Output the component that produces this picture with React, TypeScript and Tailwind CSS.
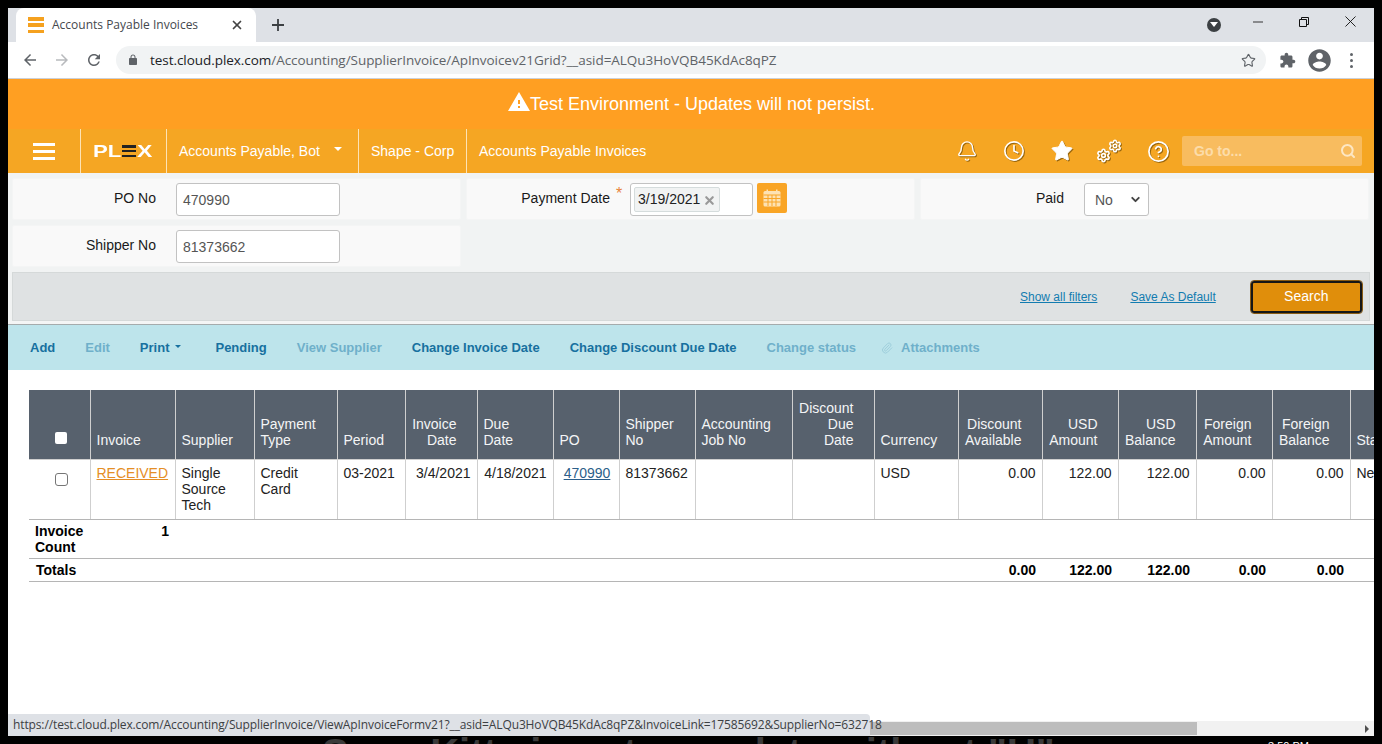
import React from "react";
import { Bell, Clock, Star, Settings, CircleHelp, Search, Paperclip, ChevronDown, X } from "lucide-react";

const Mat = ({ d, cls, fill = "currentColor" }: { d: string; cls: string; fill?: string }) => (
  <svg viewBox="0 0 24 24" className={cls} fill={fill}><path d={d} /></svg>
);

const widths = [61, 85, 79, 83, 68, 72, 76, 66, 76, 97, 82, 84, 84, 76, 78, 76, 78, 80];
const heads: [React.ReactNode, boolean][] = [
  ["", false],
  ["Invoice", false],
  ["Supplier", false],
  [<>Payment<br />Type</>, false],
  ["Period", false],
  [<>Invoice<br />Date</>, true],
  [<>Due<br />Date</>, false],
  ["PO", false],
  [<>Shipper<br />No</>, false],
  [<>Accounting<br />Job No</>, false],
  [<>Discount<br />Due<br />Date</>, true],
  ["Currency", false],
  [<>Discount<br />Available</>, true],
  [<>USD<br />Amount</>, true],
  [<>USD<br />Balance</>, true],
  [<>Foreign<br />Amount</>, true],
  [<>Foreign<br />Balance</>, true],
  ["Status", false],
];

const Filter = ({ label, star, children }: { label: string; star?: boolean; children: React.ReactNode }) => (
  <div className="flex h-[42px] rounded-[2px] bg-[#f9f9f9] border border-[#f4f5f5]">
    <div className="w-[143px] pt-[9px] text-right text-[14px] leading-[20px] text-[#1a1a1a]">{label}</div>
    <div className="w-[20px] pl-[6px] pt-[5px] text-[16px] leading-[20px] text-[#e8833a]">{star ? "*" : ""}</div>
    <div className="flex pt-[4px]">{children}</div>
  </div>
);

const TextBox = ({ value }: { value: string }) => (
  <div className="h-[33px] w-[164px] rounded-[3px] border border-[#c2c2c2] bg-white px-[6px] pt-[7px] text-[14px] leading-[18px] text-[#555]">{value}</div>
);

const actions: [string, boolean][] = [
  ["Add", true],
  ["Edit", false],
  ["Print", true],
  ["Pending", true],
  ["View Supplier", false],
  ["Change Invoice Date", true],
  ["Change Discount Due Date", true],
  ["Change status", false],
];

export default function App() {
  return (
    <div className="relative h-[744px] w-[1382px] overflow-hidden bg-black font-['Liberation_Sans',sans-serif]">
      <div className="relative mx-2 mt-2 flex h-[728px] w-[1366px] flex-col overflow-hidden bg-white">
        {/* tab strip */}
        <div className="flex h-[34px] shrink-0 items-end bg-[#dee1e6] pl-2">
          <div className="flex h-[34px] w-[240px] items-center rounded-t-[8px] bg-white pl-3 pr-[12px]">
            <div className="flex h-4 w-4 flex-col justify-between">
              <div className="h-[3.5px] bg-[#f5a11f]" />
              <div className="h-[3.5px] bg-[#f5a11f]" />
              <div className="h-[3.5px] bg-[#f5a11f]" />
            </div>
            <span className="ml-2 font-['Open_Sans',sans-serif] text-[12px] text-[#45484d]">Accounts Payable Invoices</span>
            <X className="ml-auto h-[14px] w-[14px] text-[#444]" strokeWidth={3} />
          </div>
          <svg viewBox="0 0 14 14" className="mb-[10px] ml-[15px] h-[14px] w-[14px]"><path d="M7 1v12M1 7h12" stroke="#3c4043" strokeWidth="1.8" /></svg>
          <div className="ml-auto mb-[9px] flex items-center">
            <div className="flex h-[14px] w-[14px] items-center justify-center rounded-full bg-[#3c4043]">
              <div className="h-0 w-0 border-x-[4px] border-t-[5px] border-x-transparent border-t-white" />
            </div>
            <svg viewBox="0 0 12 12" className="ml-[32px] mb-[6px] h-[10px] w-[10px]"><path d="M0 6h12" stroke="#111" strokeWidth="1" /></svg>
            <svg viewBox="0 0 10 10" className="ml-[36px] mb-[6px] h-[10px] w-[10px]" fill="none" stroke="#111" strokeWidth="1"><path d="M.5 2.5h7v7h-7zM2.5 2.5v-2h7v7h-2" /></svg>
            <svg viewBox="0 0 12 12" className="ml-[36px] mr-[18px] mb-[6px] h-[11px] w-[11px]" fill="none" stroke="#111" strokeWidth="1"><path d="M.5.5l11 11M11.5.5l-11 11" /></svg>
          </div>
        </div>
        {/* toolbar */}
        <div className="flex h-[37px] shrink-0 items-center border-b border-[#ccd0d6] bg-white">
          <Mat d="M20 11H7.83l5.59-5.59L12 4l-8 8 8 8 1.41-1.41L7.83 13H20v-2z" cls="ml-[13px] h-[18px] w-[18px] text-[#5f6368]" />
          <Mat d="M12 4l-1.41 1.41L16.17 11H4v2h12.17l-5.58 5.59L12 20l8-8z" cls="ml-[14px] h-[18px] w-[18px] text-[#b8babd]" />
          <Mat d="M17.65 6.35C16.2 4.9 14.21 4 12 4c-4.42 0-7.99 3.58-7.99 8s3.57 8 7.99 8c3.73 0 6.84-2.55 7.73-6h-2.08c-.82 2.33-3.04 4-5.65 4-3.31 0-6-2.69-6-6s2.69-6 6-6c1.66 0 3.14.69 4.22 1.78L13 11h7V4l-2.35 2.35z" cls="ml-[14px] h-[18px] w-[18px] text-[#5f6368]" />
          <div className="ml-[13px] flex h-[28px] w-[1150px] items-center rounded-full bg-[#f1f3f4] pl-[11px] pr-[10px]">
            <Mat d="M18 8h-1V6c0-2.76-2.24-5-5-5S7 3.24 7 6v2H6c-1.1 0-2 .9-2 2v10c0 1.1.9 2 2 2h12c1.1 0 2-.9 2-2V10c0-1.1-.9-2-2-2zM9 6c0-1.66 1.34-3 3-3s3 1.34 3 3v2H9V6z" cls="h-[12px] w-[12px] text-[#5f6368]" />
            <span className="ml-[11px] font-['Open_Sans',sans-serif] text-[13.5px] tracking-[-0.05px] text-[#5f6368]">
              <span className="text-[#202124]">test.cloud.plex.com</span>/Accounting/SupplierInvoice/ApInvoicev21Grid?__asid=ALQu3HoVQB45KdAc8qPZ
            </span>
            <Star className="ml-auto h-[15px] w-[15px] text-[#5f6368]" strokeWidth={1.8} />
          </div>
          <Mat d="M20.5 11H19V7c0-1.1-.9-2-2-2h-4V3.5C13 2.12 11.88 1 10.5 1S8 2.12 8 3.5V5H4c-1.1 0-1.99.9-1.99 2v3.8H3.5c1.49 0 2.7 1.21 2.7 2.7s-1.21 2.7-2.7 2.7H2V20c0 1.1.9 2 2 2h3.8v-1.5c0-1.49 1.21-2.7 2.7-2.7 1.49 0 2.7 1.21 2.7 2.7V22H17c1.1 0 2-.9 2-2v-4h1.5c1.38 0 2.5-1.12 2.5-2.5S21.88 11 20.5 11z" cls="ml-[13px] h-[17px] w-[17px] text-[#5f6368]" />
          <Mat d="M12 2C6.48 2 2 6.48 2 12s4.48 10 10 10 10-4.48 10-10S17.52 2 12 2zm0 3c1.66 0 3 1.34 3 3s-1.34 3-3 3-3-1.34-3-3 1.34-3 3-3zm0 14.2c-2.5 0-4.71-1.28-6-3.22.03-1.99 4-3.08 6-3.08 1.99 0 5.97 1.09 6 3.08-1.29 1.94-3.5 3.22-6 3.22z" cls="ml-[10px] h-[27px] w-[27px] text-[#5f6368]" />
          <div className="ml-[17px] flex flex-col gap-[3px]">
            <div className="h-[3px] w-[3px] rounded-full bg-[#5f6368]" />
            <div className="h-[3px] w-[3px] rounded-full bg-[#5f6368]" />
            <div className="h-[3px] w-[3px] rounded-full bg-[#5f6368]" />
          </div>
        </div>
        {/* env banner */}
        <div className="flex h-[50px] shrink-0 items-center justify-center bg-[#ff9f22] text-[18px] text-white">
          <Mat d="M1 21h22L12 2 1 21zm12-3h-2v-2h2v2zm0-4h-2v-4h2v4z" cls="h-[24px] w-[24px] -mt-[5px] -mr-[1px]" />
          <span>Test Environment - Updates will not persist.</span>
        </div>
        {/* nav */}
        <div className="flex h-[44px] shrink-0 items-stretch bg-[#f5a623] text-[14px] text-white">
          <div className="flex w-[73px] items-center border-r border-[#fde3b5] pl-[25px]">
            <div className="flex h-[17px] w-[22px] flex-col justify-between">
              <div className="h-[3px] bg-white" />
              <div className="h-[3px] bg-white" />
              <div className="h-[3px] bg-white" />
            </div>
          </div>
          <div className="flex w-[86px] items-center border-r border-[#fde3b5] pl-[12px] text-[17px] font-bold leading-none">
            <span className="inline-block w-[29px] origin-left scale-x-[1.3]">PL</span>
            <div className="flex h-[12px] w-[14px] flex-col justify-between">
              <div className="h-[2.5px] bg-[#222]" />
              <div className="h-[2.5px] bg-[#222]" />
              <div className="h-[2.5px] bg-[#222]" />
            </div>
            <span className="ml-[1px] inline-block origin-left scale-x-[1.35]">X</span>
          </div>
          <div className="flex w-[192px] items-center border-r border-[#fde3b5] pl-[12px]">
            <span>Accounts Payable, Bot</span>
            <div className="ml-[14px] mb-[5px] h-0 w-0 border-x-[4px] border-t-[4px] border-x-transparent border-t-white" />
          </div>
          <div className="flex w-[108px] items-center border-r border-[#fde3b5] pl-[12px]">Shape - Corp</div>
          <div className="flex items-center pl-[12px]">Accounts Payable Invoices</div>
          <div className="ml-auto flex items-center text-white [&>svg]:drop-shadow-[1px_1px_0_rgba(90,60,0,0.6)]">
            <Bell className="h-[22px] w-[22px]" strokeWidth={1.5} />
            <Clock className="ml-[25px] h-[22px] w-[22px]" strokeWidth={1.8} />
            <Star className="ml-[25px] h-[24px] w-[24px]" fill="white" strokeWidth={1} />
            <div className="relative ml-[23px] h-[24px] w-[24px] drop-shadow-[1px_1px_0_rgba(90,60,0,0.6)]">
              <Settings className="absolute -left-[1px] bottom-0 h-[15px] w-[15px]" strokeWidth={2.6} />
              <Settings className="absolute -right-[1px] top-0 h-[14px] w-[14px]" strokeWidth={2.6} />
            </div>
            <CircleHelp className="ml-[26px] h-[23px] w-[23px]" strokeWidth={1.8} />
            <div className="ml-[12px] mr-[12px] flex h-[30px] w-[180px] items-center rounded-[2px] bg-[#f8bc5f] pl-[12px] pr-[6px]">
              <span className="text-[14px] font-bold text-[#fcdcaa]">Go to...</span>
              <Search className="ml-auto h-[16px] w-[16px] text-[#fde7c4]" strokeWidth={3} />
            </div>
          </div>
        </div>
        {/* filters */}
        <div className="shrink-0 bg-[#f1f3f3]">
          <div className="grid w-[1362px] grid-cols-[449px_449px_449px] gap-[5px] pl-[4px] pt-[5px]">
            <Filter label="PO No"><TextBox value="470990" /></Filter>
            <Filter label="Payment Date" star>
              <div className="flex h-[33px] w-[123px] items-start rounded-[3px] border border-[#c2c2c2] bg-white p-[3px]">
                <div className="flex h-[25px] items-center rounded-[2px] border border-[#d5dcdc] bg-[#f1f3f3] pl-[3px] pr-[3px] text-[14px] text-[#222]">
                  3/19/2021
                  <X className="ml-[3px] mt-[2px] h-[13px] w-[13px] text-[#999]" strokeWidth={4} />
                </div>
              </div>
              <div className="ml-[4px] flex h-[30px] w-[30px] items-center justify-center rounded-[2px] bg-[#f9a526]">
                <svg viewBox="0 0 18 18" className="h-[18px] w-[18px]">
                  <rect x="0.5" y="2" width="17" height="15.5" rx="1.5" fill="#fde2b3" />
                  <rect x="3.5" y="0.5" width="1.5" height="3" fill="#fde2b3" />
                  <rect x="13" y="0.5" width="1.5" height="3" fill="#fde2b3" />
                  <path d="M.5 6h17M.5 9.5h17M.5 13h17M5 6v11M9 6v11M13 6v11" stroke="#f9a526" strokeWidth="1" />
                </svg>
              </div>
            </Filter>
            <Filter label="Paid">
              <div className="flex h-[33px] w-[65px] items-center rounded-[3px] border border-[#c2c2c2] bg-white pl-[10px] pr-[6px] pt-[1px] text-[14px] text-[#555]">
                No
                <ChevronDown className="ml-auto -mt-[2px] h-[13px] w-[13px] text-[#444]" strokeWidth={3.5} />
              </div>
            </Filter>
            <Filter label="Shipper No"><TextBox value="81373662" /></Filter>
          </div>
          {/* action bar */}
          <div className="ml-[4px] mt-[5px] flex h-[49px] w-[1358px] items-center border border-[#d5d9d9] bg-[#dfe2e3] text-[12px] text-[#137cb0]">
            <span className="ml-[1007px] underline">Show all filters</span>
            <span className="ml-[33px] underline">Save As Default</span>
            <div className="ml-[34px] rounded-[4px] border border-[#8a5c14] bg-white">
              <div className="flex h-[32px] w-[111px] items-center justify-center rounded-[3px] border-[2px] border-[#161616] bg-[#e08e0b] text-[14px] text-white">Search</div>
            </div>
          </div>
          <div className="h-[4px] border-b border-[#a5abac] bg-[#f4f5f5]" />
        </div>
        {/* grid actions */}
        <div className="flex h-[45px] shrink-0 items-center gap-[30px] bg-[#bde4eb] pl-[22px] pt-[1px] text-[13px] font-bold">
          {actions.map(([t, on]) => (
            <span key={t} className={on ? "flex items-center text-[#17709f]" : "text-[#6fb0ca]"}>
              {t}
              {t === "Print" && <span className="ml-[6px] mr-[4px] mb-[3px] h-0 w-0 border-x-[3.5px] border-t-[3.5px] border-x-transparent border-t-[#17709f]" />}
            </span>
          ))}
          <span className="-ml-[5px] flex items-center text-[#6fb0ca]">
            <Paperclip className="mr-[8px] h-[12px] w-[12px] text-[#9fcfdc]" strokeWidth={2} />
            Attachments
          </span>
        </div>
        {/* table */}
        <div className="min-h-0 flex-1 overflow-hidden bg-white pl-[21px] pt-[20px]">
          <table className="table-fixed border-collapse text-[14px] leading-[16px] text-[#222]" style={{ width: widths.reduce((a, b) => a + b, 0) }}>
            <colgroup>
              {widths.map((w, i) => <col key={i} style={{ width: w }} />)}
            </colgroup>
            <thead>
              <tr className="h-[69px] bg-[#57616d] text-[#f4f5f6]">
                {heads.map(([h, right], i) => (
                  <th key={i} className={`border-x border-b border-[#cfcfcf] border-t-0 pb-[11px] pl-[6px] align-bottom font-normal ${right ? "pr-[20px] text-right" : "pr-[2px] text-left"} first:border-l-0`}>
                    {i === 0 ? <div className="mb-[4px] ml-[20px] h-[12px] w-[12px] rounded-[2px] bg-white" /> : h}
                  </th>
                ))}
              </tr>
            </thead>
            <tbody>
              <tr className="h-[60px]">
                <td className="border-x border-b border-[#cfcfcf] border-b-[#b5b5b5] px-0 pt-[13px] align-top first:border-l-0">
                  <div className="ml-[26px] h-[13px] w-[13px] rounded-[3px] border border-[#767676] bg-white" />
                </td>
                {[
                  <span className="text-[#e58e26] underline">RECEIVED</span>,
                  <>Single<br />Source<br />Tech</>,
                  <>Credit<br />Card</>,
                  "03-2021",
                  <div className="text-right">3/4/2021</div>,
                  <div className="text-right">4/18/2021</div>,
                  <div className="pl-[2px] text-center"><span className="text-[#2c5f8a] underline">470990</span></div>,
                  "81373662",
                  "",
                  "",
                  "USD",
                  <div className="text-right">0.00</div>,
                  <div className="text-right">122.00</div>,
                  <div className="text-right">122.00</div>,
                  <div className="text-right">0.00</div>,
                  <div className="text-right">0.00</div>,
                  "New",
                ].map((c, i) => (
                  <td key={i} className="border-x border-b border-[#cfcfcf] border-b-[#b5b5b5] px-[6px] pt-[5px] align-top">{c}</td>
                ))}
              </tr>
              <tr className="h-[39px]">
                <td colSpan={2} className="border-b border-[#b5b5b5] px-[6px] align-top pt-[3px]">
                  <div className="flex font-bold text-black">
                    <span>Invoice<br />Count</span>
                    <span className="ml-auto">1</span>
                  </div>
                </td>
                <td colSpan={16} className="border-b border-[#b5b5b5]" />
              </tr>
              <tr className="h-[23px] font-bold text-black">
                <td colSpan={2} className="border-b border-[#b5b5b5] pl-[7px] pr-[6px]">Totals</td>
                <td colSpan={10} className="border-b border-[#b5b5b5]" />
                {["0.00", "122.00", "122.00", "0.00", "0.00"].map((v, i) => (
                  <td key={i} className="border-b border-[#b5b5b5] pr-[6px] text-right">{v}</td>
                ))}
                <td className="border-b border-[#b5b5b5]" />
              </tr>
            </tbody>
          </table>
        </div>
        {/* horizontal scrollbar */}
        <div className="flex h-[15px] shrink-0 items-center bg-[#f1f1f1]">
          <div className="h-[13px] w-[1189px] bg-[#bdbdbd]" />
          <div className="ml-auto mr-[5px] h-0 w-0 border-y-[4px] border-l-[4px] border-y-transparent border-l-[#505050]" />
        </div>
        {/* status bubble */}
        <div className="absolute bottom-0 left-0 flex h-[22px] w-[862px] items-center whitespace-nowrap rounded-tr-[4px] bg-[#dee1e6] pl-[5px] font-['Open_Sans',sans-serif] text-[12px] tracking-[-0.12px] text-[#3c4043]">
          https://test.cloud.plex.com/Accounting/SupplierInvoice/ViewApInvoiceFormv21?__asid=ALQu3HoVQB45KdAc8qPZ&amp;InvoiceLink=17585692&amp;SupplierNo=632718
        </div>
      </div>
      {/* what shows below the window */}
      <div className="flex h-[8px] overflow-hidden text-[#3a3a3a]">
        <span className="ml-[322px] -mt-[3px] whitespace-nowrap text-[40px] font-bold leading-[40px]">See</span>
        <span className="ml-[37px] -mt-[3px] whitespace-nowrap text-[40px] font-bold leading-[40px]">Kitty is not complete without "U"</span>
        <span className="absolute left-[1268px] top-[739px] whitespace-nowrap text-[11px] leading-[14px] text-white">3:50 PM</span>
      </div>
    </div>
  );
}
